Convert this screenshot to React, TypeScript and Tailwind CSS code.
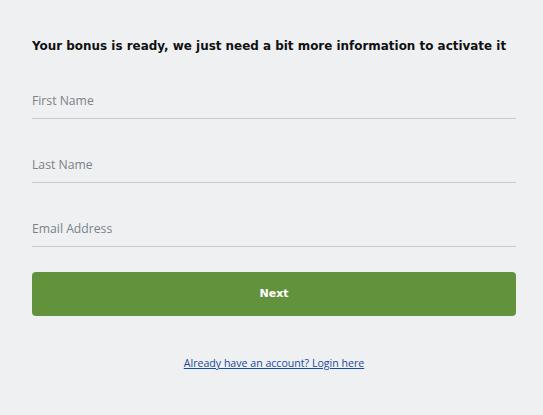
import { useState } from "react";

const App = () => {
    const [form, setForm] = useState({ first: "", last: "", email: "" });

    const fields = [
        { key: "first", label: "First Name", type: "text" },
        { key: "last", label: "Last Name", type: "text" },
        { key: "email", label: "Email Address", type: "email" },
    ] as const;

    return (
        <div className="min-h-[415px] w-full bg-[#eef0f2] pl-8 pr-[27px] pt-[38px] font-['Open_Sans',sans-serif]">
            <h2 className="whitespace-nowrap font-['DejaVu_Sans',sans-serif] text-[11.95px] font-bold leading-4 text-[#111]">
                Your bonus is ready, we just need a bit more information to activate it
            </h2>
            <form className="mt-[18px] flex flex-col gap-[17px]" onSubmit={(e) => e.preventDefault()}>
                {fields.map((f) => (
                    <input
                        key={f.key}
                        type={f.type}
                        placeholder={f.label}
                        value={form[f.key]}
                        onChange={(e) => setForm({ ...form, [f.key]: e.target.value })}
                        className="h-[47px] w-full border-b border-[#c8cacd] bg-transparent pt-[10px] text-[12.2px] text-[#333] outline-none placeholder:text-[#7b8288]"
                    />
                ))}
                <button
                    type="submit"
                    className="mt-[8px] h-[44px] w-full rounded-[4px] bg-[#63923d] font-['DejaVu_Sans',sans-serif] text-[11px] font-bold text-white"
                >
                    Next
                </button>
            </form>
            <div className="mt-[33px] text-center">
                <a href="#" className="text-[10.6px] text-[#1a4a9a] underline">
                    Already have an account? Login here
                </a>
            </div>
        </div>
    );
};

export default App;
